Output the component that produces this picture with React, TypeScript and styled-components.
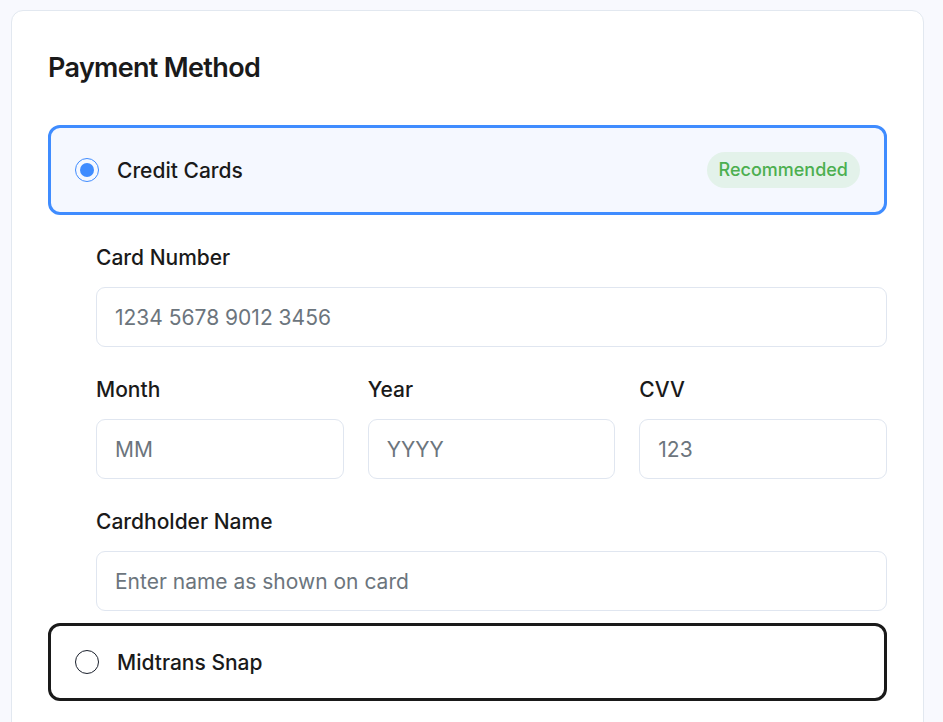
import React, { useState } from "react";
import styled, { createGlobalStyle } from "styled-components";

const GlobalStyle = createGlobalStyle`
  *, *::before, *::after { box-sizing: border-box; }
  html { background: #f8f9fe; }
  body {
    margin: 0;
    background: #f8f9fe;
    color: #1a1a1a;
    font-family: Inter, "Liberation Sans", sans-serif;
    overflow-x: hidden;
  }
`;

const Page = styled.main`
  padding: 10px 19px 0 11px;
  height: 100vh;
  overflow: hidden;
`;

const Card = styled.section`
  display: flex;
  flex-direction: column;
  gap: 12px;
  padding: 36px 36px 60px;
  background: #ffffff;
  border: 1px solid #e2e8f0;
  border-radius: 12px;
`;

const Title = styled.h2`
  margin: 0 0 24px;
  font-size: 27px;
  line-height: 42px;
  font-weight: 600;
  letter-spacing: -0.025em;
`;

const Option = styled.label<{ $selected: boolean }>`
  display: flex;
  align-items: center;
  gap: 18px;
  padding: 24px;
  border: 3px solid ${(p) => (p.$selected ? "#3f8cff" : "#1a1a1a")};
  border-radius: 12px;
  background: ${(p) => (p.$selected ? "#f5f8ff" : "#ffffff")};
  cursor: pointer;
`;

const Radio = styled.input`
  appearance: none;
  display: grid;
  place-items: center;
  width: 24px;
  height: 24px;
  margin: 0;
  border: 1px solid #1a202c;
  border-radius: 50%;
  background: transparent;

  &:checked {
    border-color: #3f8cff;
  }

  &:checked::before {
    content: "";
    width: 14px;
    height: 14px;
    border-radius: 50%;
    background: #3f8cff;
  }
`;

const OptionName = styled.span`
  flex: 1;
  padding-top: 2px;
  font-size: 21px;
  line-height: 22px;
  font-weight: 500;
`;

const Badge = styled.span`
  padding: 6px 12px;
  border-radius: 18px;
  background: #e3f2ea;
  color: #4caf50;
  font-size: 18px;
  line-height: 24px;
  font-weight: 500;
`;

const Fields = styled.div`
  display: flex;
  flex-direction: column;
  gap: 24px;
  padding: 12px 0 0 48px;
`;

const FieldRow = styled.div`
  display: grid;
  grid-template-columns: repeat(3, minmax(0, 1fr));
  gap: 24px;
`;

const FieldBox = styled.div`
  display: flex;
  flex-direction: column;
  gap: 16px;
`;

const FieldLabel = styled.label`
  padding-top: 6px;
  font-size: 21px;
  line-height: 26px;
  font-weight: 500;
`;

const TextInput = styled.input`
  width: 100%;
  height: 60px;
  padding: 0 18px;
  border: 1px solid #e0e6f0;
  border-radius: 9px;
  background: #ffffff;
  color: #1a1a1a;
  font-family: inherit;
  font-size: 21px;

  &::placeholder {
    color: #6c757d;
    opacity: 1;
  }
`;

interface FieldProps {
  id: string;
  label: string;
  placeholder: string;
}

function Field({ id, label, placeholder }: FieldProps) {
  return (
    <FieldBox>
      <FieldLabel htmlFor={id}>{label}</FieldLabel>
      <TextInput id={id} type="text" placeholder={placeholder} />
    </FieldBox>
  );
}

export default function App() {
  const [method, setMethod] = useState("card");
  return (
    <>
      <GlobalStyle />
      <Page>
        <Card>
          <Title>Payment Method</Title>
          <Option $selected={method === "card"}>
            <Radio type="radio" name="method" checked={method === "card"} onChange={() => setMethod("card")} />
            <OptionName>Credit Cards</OptionName>
            <Badge>Recommended</Badge>
          </Option>
          {method === "card" && (
            <Fields>
              <Field id="number" label="Card Number" placeholder="1234 5678 9012 3456" />
              <FieldRow>
                <Field id="month" label="Month" placeholder="MM" />
                <Field id="year" label="Year" placeholder="YYYY" />
                <Field id="cvv" label="CVV" placeholder="123" />
              </FieldRow>
              <Field id="holder" label="Cardholder Name" placeholder="Enter name as shown on card" />
            </Fields>
          )}
          <Option $selected={method === "snap"}>
            <Radio type="radio" name="method" checked={method === "snap"} onChange={() => setMethod("snap")} />
            <OptionName>Midtrans Snap</OptionName>
          </Option>
        </Card>
      </Page>
    </>
  );
}
